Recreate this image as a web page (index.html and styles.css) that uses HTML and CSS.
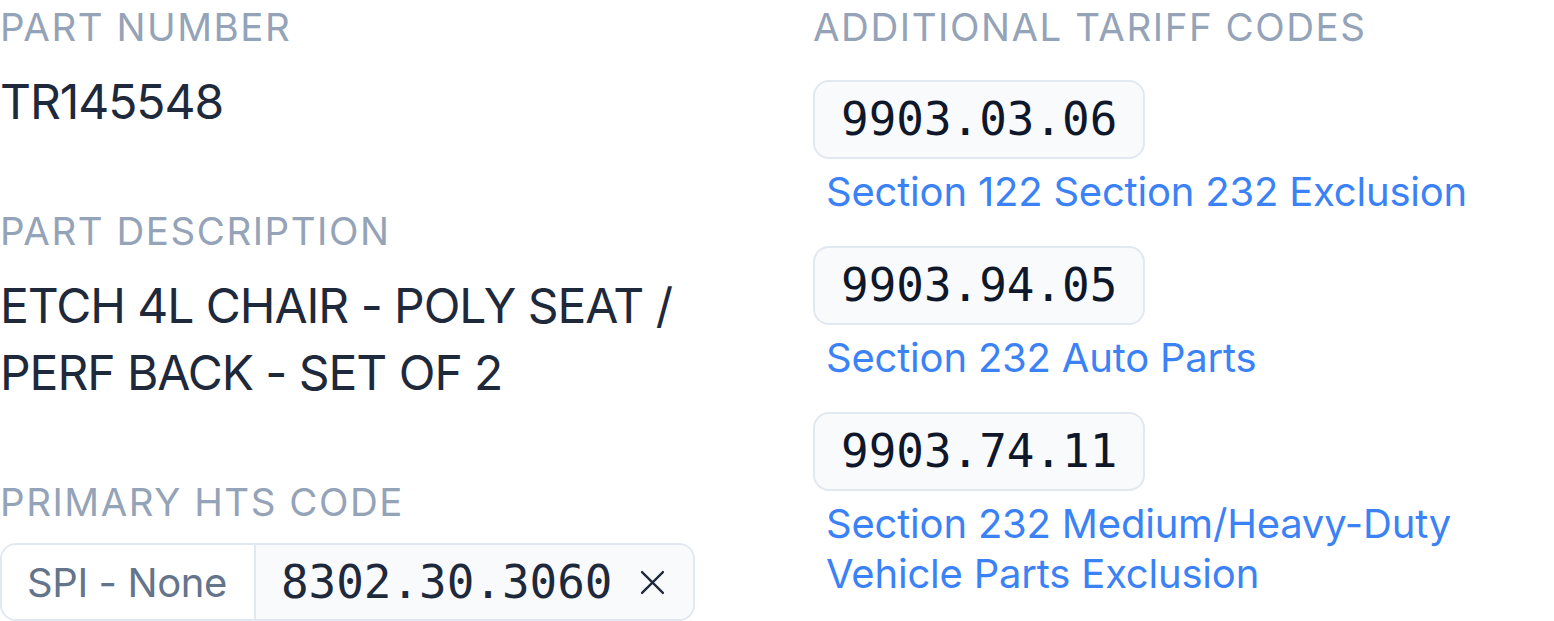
FILE: index.html
```html
<!DOCTYPE html>
<html lang="en">
<head>
<meta charset="utf-8">
<title>Part details</title>
<link rel="stylesheet" href="styles.css">
</head>
<body>
<div class="details">
  <div class="col">
    <section class="field">
      <div class="label">Part Number</div>
      <div class="value">TR145548</div>
    </section>
    <section class="field">
      <div class="label">Part Description</div>
      <div class="value">ETCH 4L CHAIR - POLY SEAT / PERF BACK - SET OF 2</div>
    </section>
    <section class="field">
      <div class="label">Primary HTS Code</div>
      <div class="hts">
        <span class="spi">SPI - None</span>
        <span class="hts-code">
          <span class="mono">8302.30.3060</span>
          <svg class="close" viewBox="0 0 24 24" width="25" height="25" aria-hidden="true"><path d="M2 2 L22 22 M22 2 L2 22" stroke="#1e293b" stroke-width="2.2" stroke-linecap="round" fill="none"/></svg>
        </span>
      </div>
    </section>
  </div>
  <div class="col">
    <section class="field">
      <div class="label">Additional Tariff Codes</div>
      <ul class="tariffs">
        <li class="tariff">
          <span class="chip mono">9903.03.06</span>
          <span class="desc">Section 122 Section 232 Exclusion</span>
        </li>
        <li class="tariff">
          <span class="chip mono">9903.94.05</span>
          <span class="desc">Section 232 Auto Parts</span>
        </li>
        <li class="tariff">
          <span class="chip mono">9903.74.11</span>
          <span class="desc">Section 232 Medium/Heavy-Duty<br>Vehicle Parts Exclusion</span>
        </li>
      </ul>
    </section>
  </div>
</div>
</body>
</html>
```

FILE: styles.css
```css
* { box-sizing: border-box; }
html, body {
  margin: 0;
  padding: 0;
  background: #ffffff;
}
body {
  font-family: Inter, "Noto Sans", sans-serif;
  color: #1e293b;
}
.details {
  display: grid;
  grid-template-columns: 741px 1fr;
  column-gap: 72px;
}
.col {
  display: flex;
  flex-direction: column;
  gap: 69px;
}
.field {
  display: flex;
  flex-direction: column;
  gap: 13px;
}
.label {
  font-size: 38.5px;
  line-height: 55px;
  font-weight: 400;
  text-transform: uppercase;
  letter-spacing: 0.04em;
  color: #94a3b8;
}
.value {
  font-size: 48px;
  line-height: 67px;
  letter-spacing: -0.022em;
  color: #1e293b;
  width: 720px;
}
.mono {
  font-family: "DejaVu Sans Mono", "Liberation Mono", monospace;
  font-size: 45.9px;
}
.hts {
  display: inline-flex;
  align-self: flex-start;
  border: 2.5px solid #e2e8f0;
  border-radius: 16px;
  overflow: hidden;
  height: 78px;
}
.spi {
  display: flex;
  align-items: center;
  padding: 0 27px 0 25px;
  font-size: 40px;
  letter-spacing: -0.01em;
  color: #64748b;
  background: #ffffff;
  border-right: 2.5px solid #e2e8f0;
}
.hts-code {
  display: flex;
  align-items: center;
  gap: 28px;
  padding: 0 28px 0 25px;
  background: #f8fafc;
  color: #1e293b;
}
.close { display: block; }
.tariffs {
  list-style: none;
  margin: 12px 0 0;
  padding: 0;
  display: flex;
  flex-direction: column;
  gap: 29px;
}
.tariff {
  display: flex;
  flex-direction: column;
  align-items: flex-start;
  gap: 8px;
}
.chip {
  display: inline-block;
  padding: 11px 26px;
  line-height: 53px;
  border: 2.5px solid #e2e8f0;
  border-radius: 16px;
  background: #f8fafc;
  color: #0f172a;
}
.desc {
  padding-left: 13px;
  font-size: 40px;
  line-height: 50px;
  letter-spacing: -0.005em;
  color: #3b82f6;
}
```
